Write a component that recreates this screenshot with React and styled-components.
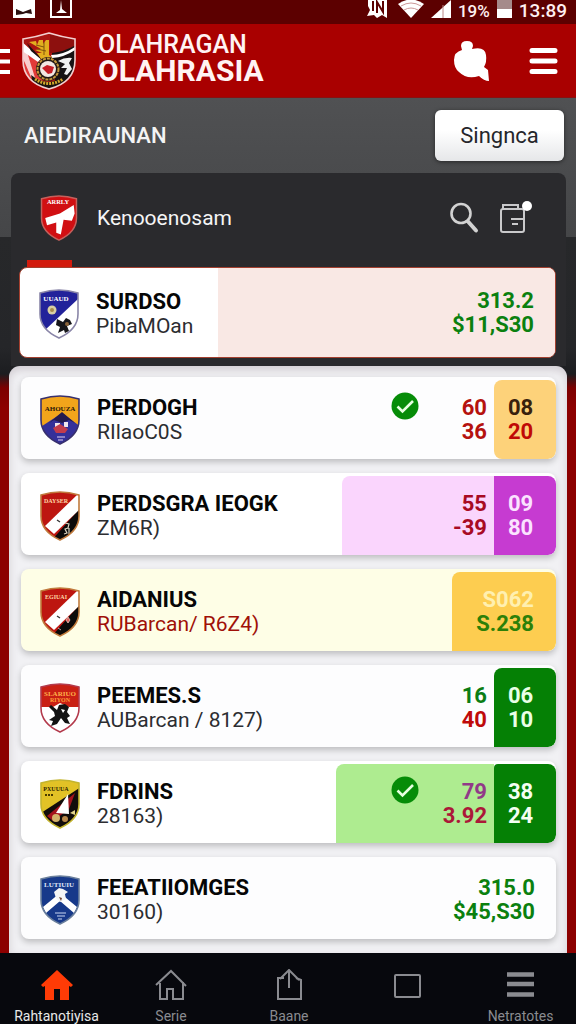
import React from "react";
import styled, { createGlobalStyle } from "styled-components";

const GlobalStyle = createGlobalStyle`
  *, *::before, *::after { box-sizing: border-box; }
  html, body { margin: 0; padding: 0; }
  body { background: #8b0000; font-family: Roboto, "Liberation Sans", sans-serif; }
  button { font-family: inherit; border: 0; padding: 0; background: none; cursor: pointer; }
  h1, h2, h3, p, ul { margin: 0; padding: 0; }
  ul { list-style: none; }
  svg { display: block; flex-shrink: 0; }
`;

const Page = styled.div`
  min-height: 100vh;
  display: flex;
  flex-direction: column;
`;

const StatusBar = styled.div`
  height: 24px;
  background: #5c0000;
  color: #fff0f0;
  display: flex;
  justify-content: space-between;
  align-items: flex-start;
  padding: 0 9px 0 13px;
`;

const StatusGroup = styled.div`
  display: flex;
  align-items: flex-start;
  gap: ${(p) => p.$gap}px;
`;

const StatusText = styled.span`
  font-size: ${(p) => p.$size}px;
  font-weight: 500;
  line-height: 22px;
`;

const AppBar = styled.header`
  height: 74px;
  background: #a90000;
  border-bottom: 1px solid #8a1010;
  display: flex;
  align-items: center;
  padding-right: 18px;
`;

const Brand = styled.h1`
  flex: 1;
  margin-left: 21px;
  margin-bottom: 5px;
  color: #fff3f3;
`;

const BrandLine = styled.span`
  display: block;
  font-size: ${(p) => (p.$big ? 30 : 25)}px;
  font-weight: ${(p) => (p.$big ? 700 : 500)};
  line-height: 26px;
`;

const IconButton = styled.button`
  display: flex;
  margin-left: ${(p) => p.$ml || 0}px;
`;

const Main = styled.main`
  flex: 1;
  background: linear-gradient(
    to bottom,
    #505153 0, #454648 139px,
    #27282a 139px, #252629 250px, #1c1d20 276px,
    #7c0000 290px, #8c0000 310px
  );
`;

const Toolbar = styled.div`
  height: 75px;
  display: flex;
  align-items: center;
  justify-content: space-between;
  padding: 0 12px 1px 24px;
`;

const ToolbarTitle = styled.h2`
  color: #f4f4f4;
  font-size: 22px;
  font-weight: 500;
`;

const ActionButton = styled.button`
  width: 129px;
  height: 51px;
  border-radius: 6px;
  background: linear-gradient(#ffffff 40%, #e6e7e9);
  box-shadow: 0 1px 4px rgba(0, 0, 0, 0.5);
  color: #25262a;
  font-size: 22px;
`;

const Panel = styled.section`
  margin: 0 10px 0 11px;
  padding: 0 0 8px 8px;
  border-radius: 8px 8px 0 0;
  background: #2a2a2d;
`;

const PanelHeader = styled.div`
  height: 87px;
  display: flex;
  align-items: center;
  padding: 3px 33px 0 20px;
`;

const PanelTitle = styled.h2`
  flex: 1;
  margin-left: 18px;
  color: #f5f5f5;
  font-size: 21px;
  font-weight: 400;
`;

const TabMarker = styled.div`
  width: 45px;
  height: 7px;
  margin-left: 8px;
  background: #d21a0c;
`;

const Card = styled.div`
  min-height: ${(p) => (p.$featured ? 91 : 82)}px;
  display: flex;
  align-items: stretch;
  border-radius: 8px;
  background: ${(p) => p.$bg || "#fdfdfe"};
  overflow: hidden;
  ${(p) =>
    p.$featured
      ? "border: 1px solid #a4402f; margin-right: 10px;"
      : "box-shadow: 0 3px 6px rgba(0, 0, 0, 0.22);"}
`;

const Sheet = styled.section`
  margin: 0 9px;
  padding: 11px 11px 14px 12px;
  border-radius: 11px 11px 0 0;
  background: #f1f1f4;
  box-shadow: inset 0 4px 8px rgba(120, 100, 110, 0.25);
`;

const RowList = styled.ul`
  display: flex;
  flex-direction: column;
  gap: 14px;
`;

const Team = styled.div`
  flex: 1;
  min-width: 0;
  display: flex;
  align-items: center;
  gap: 16px;
  padding: 3px 0 0 18px;
`;

const TeamText = styled.div`
  white-space: nowrap;
  line-height: 24px;
`;

const TeamName = styled.h3`
  color: #060606;
  font-size: 22px;
  font-weight: 700;
`;

const TeamNote = styled.p`
  color: ${(p) => p.$color || "#2c2d31"};
  font-size: 21px;
`;

const Zone = styled.div`
  width: ${(p) => p.$width};
  margin-top: ${(p) => (p.$flush ? 0 : 3)}px;
  padding-right: ${(p) => p.$pad || 7}px;
  display: flex;
  align-items: center;
  justify-content: flex-end;
  border-radius: ${(p) => p.$radius || "8px 0 0 0"};
  background: ${(p) => p.$bg || "transparent"};
`;

const Tile = styled.div`
  width: 62px;
  margin-top: 3px;
  padding-left: 14px;
  display: flex;
  align-items: center;
  border-radius: ${(p) => p.$radius || "8px 8px 8px 0"};
  background: ${(p) => p.$bg};
`;

const Figures = styled.div`
  text-align: ${(p) => p.$align || "right"};
  font-size: 22px;
  font-weight: 700;
  line-height: 24px;
`;

const Figure = styled.span`
  display: block;
  color: ${(p) => p.$color};
`;

const CheckSlot = styled.div`
  align-self: flex-start;
  margin: 12px auto 0 ${(p) => p.$left}px;
`;

const NavBar = styled.nav`
  height: 71px;
  display: grid;
  grid-template-columns: 113fr 116fr 120fr 116fr 111fr;
  background: #07080d;
  overflow: hidden;
`;

const NavItem = styled.button`
  display: flex;
  flex-direction: column;
  align-items: center;
  padding-top: 16px;
  gap: 7px;
  color: ${(p) => (p.$active ? "#e8e8e8" : "#8a8b90")};
  font-size: 14px;
  line-height: 16px;
`;

/* ---------- drawings ---------- */

const SHIELD = "M2 4 Q12 1 21 1 Q30 1 40 4 V25 C40 37 32 44 21 49 C10 44 2 37 2 25 Z";

function Shield({ id, label, labelColor = "#fff", base, edge, children, width = 42, height = 50, labelX = 20, labelY = 12, labelSize = 7 }) {
  return (
    <svg width={width} height={height} viewBox="0 0 42 50" aria-hidden="true" preserveAspectRatio="xMidYMid meet">
      <clipPath id={`clip-${id}`}><path d={SHIELD} /></clipPath>
      <g clipPath={`url(#clip-${id})`}>
        <rect width="42" height="50" fill={base} />
        {children}
        <text x={labelX} y={labelY} textAnchor="middle" fontSize={labelSize} fontWeight="700" fontFamily="Liberation Serif, serif" fill={labelColor}>
          {label}
        </text>
      </g>
      <path d={SHIELD} fill="none" stroke={edge} strokeWidth="1.6" />
    </svg>
  );
}

const BlueWhite = () => (
  <Shield id="bw" label="UUAUD" labelX={18} base="#22229a" edge="#8a86a8">
    <path d="M42 8 L6 42 L20 50 H42Z" fill="#fff" />
    <circle cx="14" cy="21" r="4.5" fill="#d8cfa4" />
    <circle cx="14" cy="21" r="2" fill="#a98d4c" />
    <path d="M19 30l6 3 3-4 4 2 2 4-5 2 2 5-4 2-1-3-6 3 2-6-4-2z" fill="#16161a" />
    <circle cx="29" cy="35" r="2" fill="#8a6238" />
  </Shield>
);

const AmberBlue = () => (
  <Shield id="ab" label="AHOUZA" labelColor="#2b1608" base="#f2a51b" edge="#38306e" labelX={21} labelY={16}>
    <path d="M0 33 L23 18 L42 32 V50 H0Z" fill="#34309a" />
    <path d="M10 28 L23 17 L36 28 L30 25 L23 28 L15 25Z" fill="#251b4e" />
    <path d="M16 28h5v5h-5zM25 27h4v5h-4z" fill="#f0e6ee" />
    <path d="M14 33l7-4 8 5-3 4H17z" fill="#c23c4c" />
    <path d="M18 42h8M19 45h5" stroke="#a79ad4" strokeWidth="1.5" />
  </Shield>
);

const RedBlack = ({ id, label, dot }) => (
  <Shield id={id} label={label} labelColor="#ffd9a8" labelX={17} labelSize={6} base="#bd1610" edge="#c07a3c">
    <path d="M42 16 L12 50 H42Z" fill="#0c0a0a" />
    <path d="M38 4 L42 5 V17 L15 43 L6 35Z" fill="#fff" />
    <path d="M18 29l3 2" stroke="#333" strokeWidth="1.4" />
    {dot ? (
      <path d="M29 30l2 3-2 3-2-3zM19 41l3 2" fill="#e0605a" stroke="#e9c7c0" strokeWidth="0.8" />
    ) : (
      <path d="M26 32l4 1-1 4-3 1 2 4-3 1M30 37v6" fill="none" stroke="#d8d0bc" strokeWidth="1.2" />
    )}
  </Shield>
);

const RedLion = () => (
  <Shield id="rl" label="SLARIUO" labelX={21} labelColor="#ffb24a" base="#c92014" edge="#b33a4c" labelY={13}>
    <text x="21" y="19" textAnchor="middle" fontSize="6" fontWeight="700" fontFamily="Liberation Serif, serif" fill="#ffa03a">RIYON</text>
    <path d="M0 24 L14 24 L21 20 L30 24 H42V50H0Z" fill="#fff" />
    <path d="M12 22l6 5 2-5 6-1 4 3-2 5 3 4-3 2 3 6-5-1-4-5-4 6-6 2 2-5-4-1 6-4-1-4-5-5z" fill="#121212" />
    <path d="M22 26l4 1-2 3z" fill="#fff" />
  </Shield>
);

const YellowBlack = () => (
  <Shield id="yb" label="PXUUUA" labelX={17} labelColor="#2c2400" labelSize={6} base="#e2c226" edge="#c3b42e">
    <path d="M42 8 L2 34 V50 H42Z" fill="#120d0b" />
    <path d="M36 14 L8 37 L14 42 L30 30Z" fill="#a3121c" />
    <path d="M29 15 L30 35 L17 34 Z" fill="#fff" />
    <circle cx="17" cy="39" r="4" fill="#d3b26a" />
    <circle cx="26" cy="40" r="3" fill="#b9884a" />
    <path d="M31 34l5-3v5z" fill="#e3d48a" />
    <path d="M6 16h9" stroke="#4b3c00" strokeWidth="2" strokeDasharray="2 1" />
  </Shield>
);

const NavyWhite = () => (
  <Shield id="nw" label="LUTIUIU" labelColor="#dfe6f8" base="#17398a" edge="#6a7f9c">
    <path d="M21 18 L38 32 L35 38 L21 26 L7 38 L4 32Z" fill="#fff" />
    <path d="M15 17l5-4 4 1 5 3-3 2 1 5-6 3-4-4z" fill="#f5f5f5" />
    <path d="M20 22l3 1-1 3z" fill="#6d4433" />
    <path d="M16 38h11M18 41h8M19 44h4" stroke="#8fa2cf" strokeWidth="1.3" />
  </Shield>
);

const HeadCrest = () => (
  <Shield id="hc" label="ARRLY" base="#d10f12" edge="#c4605c" width={40} height={46} labelY={10}>
    <path d="M6 25 L22 20 L37 11 L38 20 L35 28 L26 27 L23 43 L18 41 L18 30 L8 33Z" fill="#fff" />
  </Shield>
);

const BrandCrest = () => (
  <svg width="56" height="60" viewBox="0 0 56 60" aria-hidden="true">
    <clipPath id="brand-clip"><path d="M2 8Q15 6 28 2Q41 6 54 8V29C54 45 44 54 28 58C12 54 2 45 2 29Z" /></clipPath>
    <g clipPath="url(#brand-clip)">
      <rect width="56" height="60" fill="#a91512" />
      <path d="M29 0H56V20L29 22Z" fill="#8d100e" />
      <path d="M0 18L20 30L22 56L0 44Z" fill="#e23a38" />
      <path d="M0 10L20 28L17 31L0 19Z" fill="#fff" />
      <path d="M0 16L6 21L15 50L10 46L4 32L0 24Z" fill="#fff" opacity=".75" />
      <path d="M6 12L17 24L26 28L22 30L10 20Z" fill="#1b1210" />
      <path d="M8 11L15 10L16 14L18 9L22 9L22 13L25 9H28V24L33 28L20 28L16 22L21 22L14 19L20 18Z" fill="#e2ae1f" />
      <path d="M15 14l8 2M16 18l9 2M23 11v13" stroke="#80540c" strokeWidth="1" fill="none" />
      <path d="M31 22Q43 21 55 14V44L38 58L30 40Z" fill="#171314" />
      <path d="M30 24Q42 24 54 16V19Q44 26 31 27Z" fill="#fff" />
      <path d="M37 30Q44 26 51 27L48 32L51 38L46 44L43 43L46 37L40 37L44 33Z" fill="#f1f1f1" />
      <path d="M10 44Q28 58 44 44L46 52L28 60L12 54Z" fill="#1a1310" />
      <path d="M14 48Q28 57 42 48" stroke="#d4a82c" strokeWidth="3" strokeDasharray="2 1" fill="none" />
      <circle cx="27" cy="38" r="12" fill="#201713" />
      <circle cx="27" cy="38" r="10.5" fill="none" stroke="#c4973b" strokeWidth="2" strokeDasharray="3 1" />
      <circle cx="27" cy="38" r="8" fill="#f2e8e2" />
      <path d="M21 37L26 34L33 36L31 42L27 43Z" fill="#c51d25" />
    </g>
    <path d="M2 8Q15 6 28 2Q41 6 54 8V29C54 45 44 54 28 58C12 54 2 45 2 29Z" fill="none" stroke="#f3cfcf" strokeWidth="1.6" />
  </svg>
);

const Check = () => (
  <svg width="28" height="28" viewBox="0 0 28 28" role="img" aria-label="OK">
    <circle cx="14" cy="14" r="13.5" fill="#068c08" />
    <path d="M6.500 14.500l5 5L22 9" fill="none" stroke="#e6ffe0" strokeWidth="2.600" />
  </svg>
);

const rows = [
  {
    crest: <AmberBlue />, name: "PERDOGH", note: "RIlaoC0S",
    zone: { width: "117px" }, check: 14, figures: [["60", "#b5120f"], ["36", "#b5120f"]],
    tile: { bg: "#fdd27a", radius: "8px", figures: [["08", "#38200c"], ["20", "#c00a05"]] },
  },
  {
    crest: <RedBlack id="rb1" label="DAYSER" />, name: "PERDSGRA IEOGK", note: "ZM6R)", bg: "#fff",
    zone: { width: "152px", bg: "#fad5fd" }, figures: [["55", "#a80a24"], ["-39", "#a80a24"]],
    tile: { bg: "#c63bd1", radius: "0 8px 8px 0", figures: [["09", "#fbe2ff"], ["80", "#fbe2ff"]] },
  },
  {
    crest: <RedBlack id="rb2" label="EGIUAI" dot />, name: "AIDANIUS", note: "RUBarcan/ R6Z4)", noteColor: "#a01008", bg: "#fefee6",
    zone: { width: "104px", bg: "#fdcd50", pad: 22, radius: "8px 8px 8px 0" },
    figures: [["S062", "#fff0b0"], ["S.238", "#2c8008"]],
  },
  {
    crest: <RedLion />, name: "PEEMES.S", note: "AUBarcan / 8127)",
    zone: { width: "117px" }, figures: [["16", "#0b7d14"], ["40", "#bf0a0a"]],
    tile: { bg: "#058005", figures: [["06", "#e9ffe6"], ["10", "#e9ffe6"]] },
  },
  {
    crest: <YellowBlack />, name: "FDRINS", note: "28163)", bg: "#fff",
    zone: { width: "158px", bg: "#aeec90" }, check: 55, figures: [["79", "#913a88"], ["3.92", "#ab1838"]],
    tile: { bg: "#058005", radius: "4px 8px 8px 0", figures: [["38", "#f4fff2"], ["24", "#f4fff2"]] },
  },
  {
    crest: <NavyWhite />, name: "FEEATIIOMGES", note: "30160)",
    zone: { width: "117px", pad: 21 }, figures: [["315.0", "#0b800f"], ["$45,S30", "#0b800f"]],
  },
];

function FigurePair({ items, align }) {
  return (
    <Figures $align={align}>
      {items.map(([text, color]) => <Figure key={text} $color={color}>{text}</Figure>)}
    </Figures>
  );
}

function TeamInfo({ crest, name, note, noteColor }) {
  return (
    <Team>
      {crest}
      <TeamText>
        <TeamName>{name}</TeamName>
        <TeamNote $color={noteColor}>{note}</TeamNote>
      </TeamText>
    </Team>
  );
}

function TeamRow({ row }) {
  const { zone, tile } = row;
  return (
    <Card as="li" $bg={row.bg}>
      <TeamInfo {...row} />
      <Zone $width={zone.width} $bg={zone.bg} $pad={zone.pad} $radius={zone.radius}>
        {row.check && <CheckSlot $left={row.check}><Check /></CheckSlot>}
        <FigurePair items={row.figures} />
      </Zone>
      {tile && (
        <Tile $bg={tile.bg} $radius={tile.radius}>
          <FigurePair items={tile.figures} align="left" />
        </Tile>
      )}
    </Card>
  );
}

const navItems = [
  {
    label: "Rahtanotiyisa", active: true,
    icon: <path d="M16 1L0 16l2 2 2-1v14h9V20h6v11h9V17l2 1 2-2Z" fill="#ff3b06" />,
  },
  {
    label: "Serie",
    icon: <path d="M1 16L16 2l15 15M5 14v16h7V20h6v10h10V13" fill="none" stroke="currentColor" strokeWidth="2" />,
  },
  {
    label: "Baane",
    icon: <path d="M11 9H5v21h23V11l-5-2M16 19V1M7 10l9-9 10 10" fill="none" stroke="currentColor" strokeWidth="2" />,
  },
  {
    label: "",
    icon: <rect x="4" y="6" width="25" height="22" rx="1" fill="none" stroke="currentColor" strokeWidth="2" />,
  },
  {
    label: "Netratotes",
    icon: <path d="M2 5.500h27M2 15h27M2 25.500h27" stroke="currentColor" strokeWidth="4.500" />,
  },
];

export default function App() {
  return (
    <Page>
      <GlobalStyle />
      <StatusBar>
        <StatusGroup $gap={15}>
          <svg width="22" height="18" viewBox="0 0 22 18" aria-hidden="true">
            <path d="M0 0h22v18H0z" fill="#fff" />
            <path d="M3 9l7 3 8-3 1 5-6-1-3 1-7 1z" fill="#2a1010" />
          </svg>
          <svg width="22" height="18" viewBox="0 0 22 18" aria-hidden="true">
            <path d="M1 0v17h20V0" fill="#4a0000" stroke="#fff" strokeWidth="2" />
            <path d="M11 0l1 9 5 4H6l4-3z" fill="#fff" />
          </svg>
        </StatusGroup>
        <StatusGroup $gap={7}>
          <StatusGroup $gap={10}>
            <svg width="22" height="19" viewBox="0 0 22 19" aria-hidden="true">
              <path d="M2 0h19v18l-5-3-5 3-3-3-7 1 3-6-2-4z" fill="#fff" />
              <path d="M7 1v10M11 13V2l6 10V1" fill="none" stroke="#5c0000" strokeWidth="2" />
            </svg>
            <svg width="26" height="18" viewBox="0 0 26 18" aria-hidden="true">
              <path d="M0 4Q13-5 26 4L13 18Z" fill="#fff" />
              <path d="M3 6q10-6 20 0M6 10q7-4 14 0" fill="none" stroke="#c99" strokeWidth="1" />
            </svg>
          </StatusGroup>
          <svg width="20" height="18" viewBox="0 0 20 18" aria-hidden="true">
            <path d="M0 18L20 0V18Z" fill="#fff" />
            <path d="M12 5v13" stroke="#b88" />
          </svg>
          <StatusText $size={17}>19%</StatusText>
          <svg width="15" height="18" viewBox="0 0 15 18" aria-hidden="true">
            <path d="M0 0h15v18H0z" fill="#fff" />
            <path d="M0 0h15v9H0z" fill="#a58a8a" />
          </svg>
          <StatusText $size={19}>13:89</StatusText>
        </StatusGroup>
      </StatusBar>

      <AppBar>
        <IconButton aria-label="Menu">
          <svg width="21" height="28" viewBox="0 0 21 28">
            <path d="M0 4h10M0 14.500h10M0 25h10" stroke="#fff" strokeWidth="4" />
          </svg>
        </IconButton>
        <BrandCrest />
        <Brand>
          <BrandLine>OLAHRAGAN</BrandLine>
          <BrandLine $big>OLAHRASIA</BrandLine>
        </Brand>
        <IconButton aria-label="Search">
          <svg width="36" height="42" viewBox="0 0 36 42">
            <path d="M8 6Q8 1 14 1Q20 1 20 6L19 9Q32 6 33 15Q34 22 31 27L35 30L36 41Q31 41 26 36Q14 40 6 32Q1 28 1 20Q1 12 9 10Z" fill="#fff" />
          </svg>
        </IconButton>
        <IconButton aria-label="Options" $ml={39}>
          <svg width="30" height="28" viewBox="0 0 30 28">
            <path d="M4 3.500h23M4 14h23M4 24.500h23" stroke="#fff" strokeWidth="5" strokeLinecap="round" />
          </svg>
        </IconButton>
      </AppBar>

      <Main>
        <Toolbar>
          <ToolbarTitle>AIEDIRAUNAN</ToolbarTitle>
          <ActionButton>Singnca</ActionButton>
        </Toolbar>

        <Panel>
          <PanelHeader>
            <HeadCrest />
            <PanelTitle>Kenooenosam</PanelTitle>
            <IconButton aria-label="Find">
              <svg width="30" height="32" viewBox="0 0 30 32" fill="none" stroke="#d2d2d2">
                <circle cx="12" cy="11.5" r="9.500" strokeWidth="2.600" />
                <path d="M19 19.500L27 28.500" strokeWidth="4" strokeLinecap="round" />
              </svg>
            </IconButton>
            <IconButton aria-label="Notes" $ml={20}>
              <svg width="34" height="34" viewBox="0 0 34 34" fill="none" stroke="#c9c9cb" strokeWidth="2">
                <rect x="2" y="8" width="23" height="23" rx="2" />
                <path d="M4 8V4h15v4M12 18h12M13 23h6" />
                <circle cx="28" cy="5" r="5" fill="#fff" stroke="none" />
              </svg>
            </IconButton>
          </PanelHeader>
          <TabMarker />
          <Card $featured $bg="#fff">
            <TeamInfo crest={<BlueWhite />} name="SURDSO" note="PibaMOan" />
            <Zone $flush $width="63%" $bg="#f9e8e4" $radius="0" $pad={21}>
              <FigurePair items={[["313.2", "#0b800f"], ["$11,S30", "#0b800f"]]} />
            </Zone>
          </Card>
        </Panel>

        <Sheet>
          <RowList>
            {rows.map((row) => <TeamRow key={row.name} row={row} />)}
          </RowList>
        </Sheet>
      </Main>

      <NavBar>
        {navItems.map((item) => (
          <NavItem key={item.label || "square"} $active={item.active} aria-label={item.label || "Square"}>
            <svg width="32" height="32" viewBox="0 0 32 32" aria-hidden="true">{item.icon}</svg>
            {item.label}
          </NavItem>
        ))}
      </NavBar>
    </Page>
  );
}
